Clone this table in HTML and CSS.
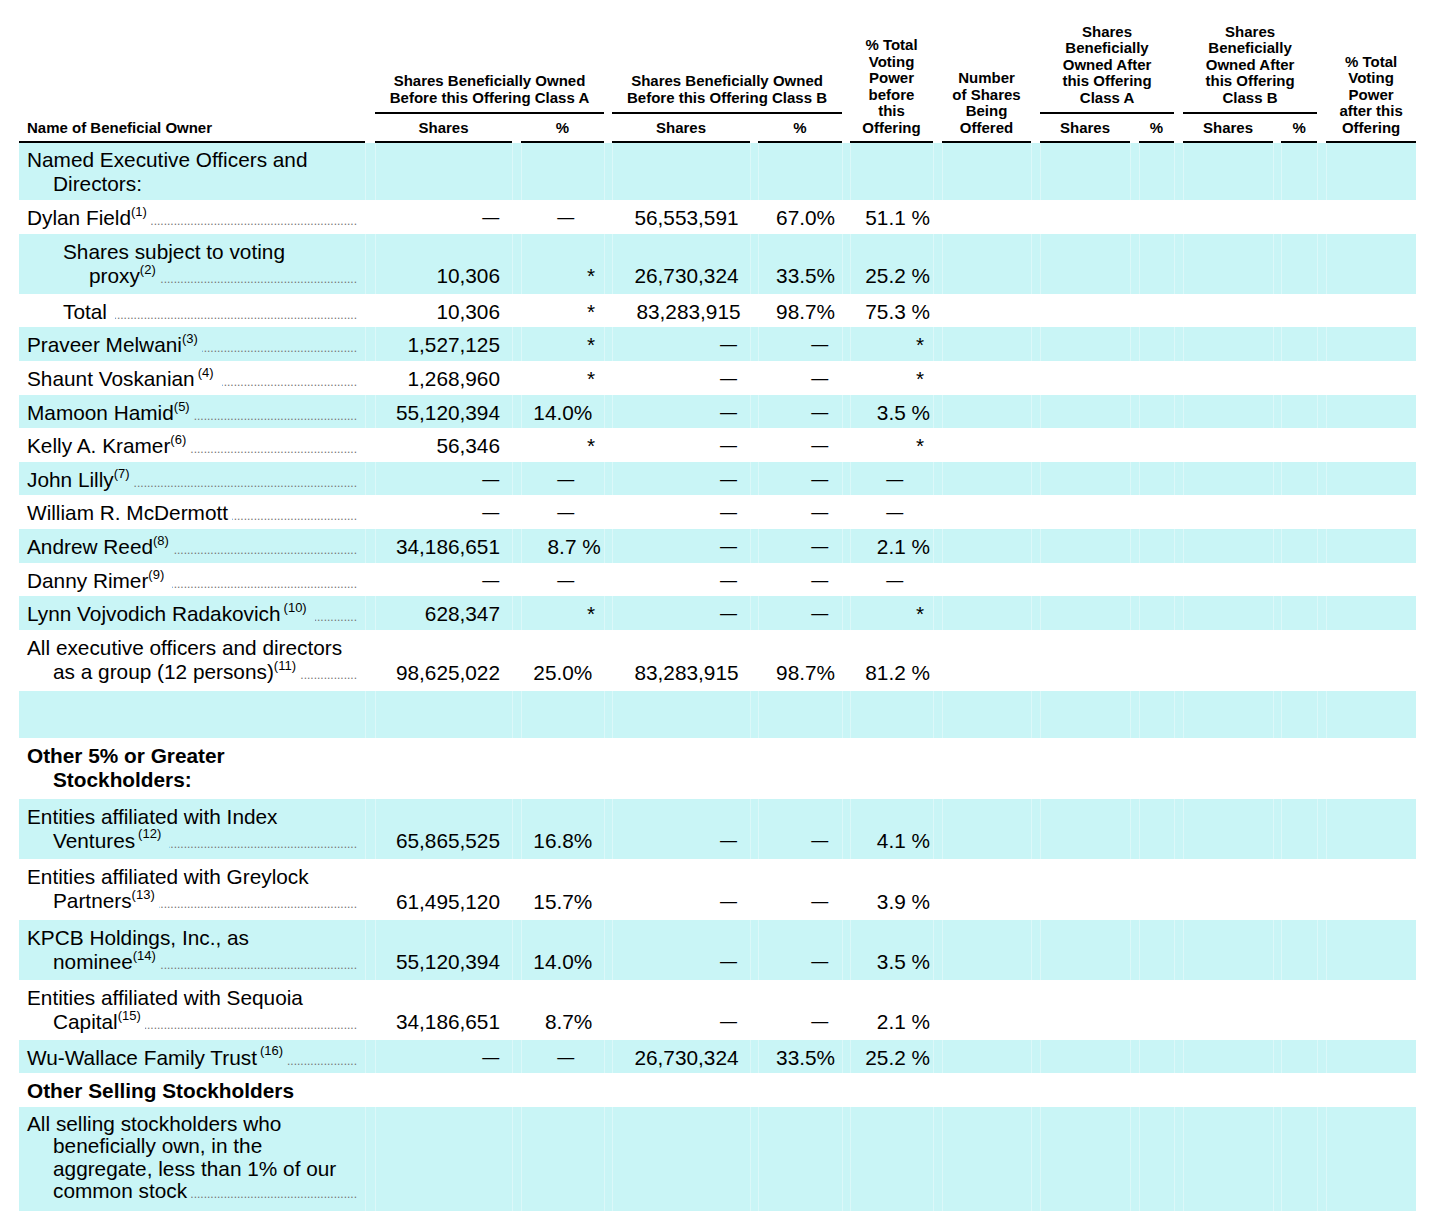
FILE: index.html
```html
<!DOCTYPE html>
<html lang="en">
<head>
<meta charset="utf-8">
<title>Beneficial Ownership Table</title>
<link rel="stylesheet" href="styles.css">
</head>
<body>
<div class="page">
<table class="own">
<colgroup>
<col class="w1"><col class="w2"><col class="w3"><col class="w4"><col class="w5"><col class="w6"><col class="w7"><col class="w8"><col class="w9"><col class="w10"><col class="w11"><col class="w12">
</colgroup>
<thead>
<tr>
<th rowspan="2" class="nmh"><div class="rule">Name of Beneficial Owner</div></th>
<th colspan="2" class="grp g10"><div class="rule">Shares Beneficially Owned<br>Before this Offering Class A</div></th>
<th colspan="2" class="grp g8"><div class="rule">Shares Beneficially Owned<br>Before this Offering Class B</div></th>
<th rowspan="2" class="g8"><div class="rule">% Total<br>Voting<br>Power<br>before<br>this<br>Offering</div></th>
<th rowspan="2" class="g9"><div class="rule">Number<br>of Shares<br>Being<br>Offered</div></th>
<th colspan="2" class="grp g9"><div class="rule">Shares<br>Beneficially<br>Owned After<br>this Offering<br>Class A</div></th>
<th colspan="2" class="grp g9"><div class="rule">Shares<br>Beneficially<br>Owned After<br>this Offering<br>Class B</div></th>
<th rowspan="2" class="g9"><div class="rule">% Total<br>Voting<br>Power<br>after this<br>Offering</div></th>
</tr>
<tr class="sub">
<th class="g10"><div class="rule">Shares</div></th>
<th class="g9"><div class="rule">%</div></th>
<th class="g8"><div class="rule">Shares</div></th>
<th class="g8"><div class="rule">%</div></th>
<th class="g9"><div class="rule">Shares</div></th>
<th class="g9"><div class="rule">%</div></th>
<th class="g9"><div class="rule">Shares</div></th>
<th class="g8"><div class="rule">%</div></th>
</tr>
</thead>
<tbody>
<tr class="c r57"><td class="nm"><div>Named Executive Officers and</div><div class="i1">Directors:</div></td><td></td><td></td><td></td><td></td><td></td><td></td><td></td><td></td><td></td><td></td><td></td></tr>
<tr><td class="nm"><div class="ln"><span class="t">Dylan Field<sup>(1)</sup></span><span class="dots"></span></div></td><td class="d">—</td><td class="d">—</td><td>56,553,591</td><td>67.0%</td><td>51.1&nbsp;%</td><td></td><td></td><td></td><td></td><td></td><td></td></tr>
<tr class="c r60"><td class="nm"><div class="i2">Shares subject to voting</div><div class="ln i3"><span class="t">proxy<sup>(2)</sup></span><span class="dots"></span></div></td><td>10,306</td><td class="s">*</td><td>26,730,324</td><td>33.5%</td><td>25.2&nbsp;%</td><td></td><td></td><td></td><td></td><td></td><td></td></tr>
<tr><td class="nm"><div class="ln i2"><span class="t">Total</span><span class="dots wide"></span></div></td><td>10,306</td><td class="s">*</td><td class="w">83,283,915</td><td>98.7%</td><td>75.3&nbsp;%</td><td></td><td></td><td></td><td></td><td></td><td></td></tr>
<tr class="c"><td class="nm"><div class="ln"><span class="t">Praveer Melwani<sup>(3)</sup></span><span class="dots"></span></div></td><td>1,527,125</td><td class="s">*</td><td class="d">—</td><td class="d">—</td><td class="s">*</td><td></td><td></td><td></td><td></td><td></td><td></td></tr>
<tr><td class="nm"><div class="ln"><span class="t">Shaunt Voskanian<sup class="gap">(4)</sup></span><span class="dots wide"></span></div></td><td>1,268,960</td><td class="s">*</td><td class="d">—</td><td class="d">—</td><td class="s">*</td><td></td><td></td><td></td><td></td><td></td><td></td></tr>
<tr class="c"><td class="nm"><div class="ln"><span class="t">Mamoon Hamid<sup>(5)</sup></span><span class="dots"></span></div></td><td>55,120,394</td><td>14.0%</td><td class="d">—</td><td class="d">—</td><td>3.5&nbsp;%</td><td></td><td></td><td></td><td></td><td></td><td></td></tr>
<tr><td class="nm"><div class="ln"><span class="t">Kelly A. Kramer<sup>(6)</sup></span><span class="dots"></span></div></td><td>56,346</td><td class="s">*</td><td class="d">—</td><td class="d">—</td><td class="s">*</td><td></td><td></td><td></td><td></td><td></td><td></td></tr>
<tr class="c"><td class="nm"><div class="ln"><span class="t">John Lilly<sup>(7)</sup></span><span class="dots"></span></div></td><td class="d">—</td><td class="d">—</td><td class="d">—</td><td class="d">—</td><td class="d">—</td><td></td><td></td><td></td><td></td><td></td><td></td></tr>
<tr><td class="nm"><div class="ln"><span class="t">William R. McDermott</span><span class="dots"></span></div></td><td class="d">—</td><td class="d">—</td><td class="d">—</td><td class="d">—</td><td class="d">—</td><td></td><td></td><td></td><td></td><td></td><td></td></tr>
<tr class="c"><td class="nm"><div class="ln"><span class="t">Andrew Reed<sup>(8)</sup></span><span class="dots"></span></div></td><td>34,186,651</td><td class="w">8.7&nbsp;%</td><td class="d">—</td><td class="d">—</td><td>2.1&nbsp;%</td><td></td><td></td><td></td><td></td><td></td><td></td></tr>
<tr><td class="nm"><div class="ln"><span class="t">Danny Rimer<sup>(9)</sup></span><span class="dots wide"></span></div></td><td class="d">—</td><td class="d">—</td><td class="d">—</td><td class="d">—</td><td class="d">—</td><td></td><td></td><td></td><td></td><td></td><td></td></tr>
<tr class="c"><td class="nm"><div class="ln"><span class="t">Lynn Vojvodich Radakovich<sup class="gap">(10)</sup></span><span class="dots wide"></span></div></td><td>628,347</td><td class="s">*</td><td class="d">—</td><td class="d">—</td><td class="s">*</td><td></td><td></td><td></td><td></td><td></td><td></td></tr>
<tr class="r61"><td class="nm"><div>All executive officers and directors</div><div class="ln i1"><span class="t">as a group (12 persons)<sup>(11)</sup></span><span class="dots"></span></div></td><td>98,625,022</td><td>25.0%</td><td>83,283,915</td><td>98.7%</td><td>81.2&nbsp;%</td><td></td><td></td><td></td><td></td><td></td><td></td></tr>
<tr class="c e"><td class="nm"></td><td></td><td></td><td></td><td></td><td></td><td></td><td></td><td></td><td></td><td></td><td></td></tr>
<tr class="r61"><td class="nm bold"><div>Other 5% or Greater</div><div class="i1">Stockholders:</div></td><td></td><td></td><td></td><td></td><td></td><td></td><td></td><td></td><td></td><td></td><td></td></tr>
<tr class="c r60"><td class="nm"><div>Entities affiliated with Index</div><div class="ln i1"><span class="t">Ventures<sup class="gap">(12)</sup></span><span class="dots wide"></span></div></td><td>65,865,525</td><td>16.8%</td><td class="d">—</td><td class="d">—</td><td>4.1&nbsp;%</td><td></td><td></td><td></td><td></td><td></td><td></td></tr>
<tr class="r61"><td class="nm"><div>Entities affiliated with Greylock</div><div class="ln i1"><span class="t">Partners<sup>(13)</sup></span><span class="dots"></span></div></td><td>61,495,120</td><td>15.7%</td><td class="d">—</td><td class="d">—</td><td>3.9&nbsp;%</td><td></td><td></td><td></td><td></td><td></td><td></td></tr>
<tr class="c r60"><td class="nm"><div>KPCB Holdings, Inc., as</div><div class="ln i1"><span class="t">nominee<sup>(14)</sup></span><span class="dots"></span></div></td><td>55,120,394</td><td>14.0%</td><td class="d">—</td><td class="d">—</td><td>3.5&nbsp;%</td><td></td><td></td><td></td><td></td><td></td><td></td></tr>
<tr class="r60"><td class="nm"><div>Entities affiliated with Sequoia</div><div class="ln i1"><span class="t">Capital<sup>(15)</sup></span><span class="dots"></span></div></td><td>34,186,651</td><td>8.7%</td><td class="d">—</td><td class="d">—</td><td>2.1&nbsp;%</td><td></td><td></td><td></td><td></td><td></td><td></td></tr>
<tr class="c"><td class="nm"><div class="ln"><span class="t">Wu-Wallace Family Trust<sup class="gap">(16)</sup></span><span class="dots"></span></div></td><td class="d">—</td><td class="d">—</td><td>26,730,324</td><td>33.5%</td><td>25.2&nbsp;%</td><td></td><td></td><td></td><td></td><td></td><td></td></tr>
<tr><td class="nm bold"><div>Other Selling Stockholders</div></td><td></td><td></td><td></td><td></td><td></td><td></td><td></td><td></td><td></td><td></td><td></td></tr>
<tr class="c r104"><td class="nm"><div>All selling stockholders who</div><div class="i1">beneficially own, in the</div><div class="i1">aggregate, less than 1% of our</div><div class="ln i1"><span class="t">common stock</span><span class="dots"></span></div></td><td></td><td></td><td></td><td></td><td></td><td></td><td></td><td></td><td></td><td></td><td></td></tr>
</tbody>
</table>
</div>
</body>
</html>
```
FILE: styles.css
```css
* { box-sizing: border-box; }
html, body { margin: 0; padding: 0; background: #fff; }
body { font-family: "Liberation Sans", Arial, Helvetica, sans-serif; color: #000; }

.page { padding: 23.5px 0 0 19px; }

.own { border-collapse: collapse; border-spacing: 0; table-layout: fixed; width: 1397px; }
.own th, .own td { padding: 0; }

.w1 { width: 346px; }
.w2 { width: 147px; }
.w3 { width: 92px; }
.w4 { width: 146px; }
.w5 { width: 92px; }
.w6 { width: 91px; }
.w7 { width: 98px; }
.w8 { width: 99px; }
.w9 { width: 44px; }
.w10 { width: 99px; }
.w11 { width: 44px; }
.w12 { width: 99px; }

/* header */
.own thead th { font-size: 15px; line-height: 16.5px; font-weight: bold; text-align: center; vertical-align: bottom; white-space: nowrap; }
.own thead .rule { border-bottom: 2px solid #000; padding-bottom: 5px; }
.own thead .grp .rule { padding-bottom: 6.4px; }
.own thead tr.sub th { padding-top: 5.4px; }
.own thead th.nmh { text-align: left; }
.own thead th.nmh .rule { padding-left: 8px; }
.own th.g8 { padding-left: 8px; }
.own th.g9 { padding-left: 9px; }
.own th.g10 { padding-left: 10px; }

/* body */
.own tbody td { font-size: 20.8px; line-height: 23.6px; padding: 6px 0 4px 0; vertical-align: bottom; text-align: right; white-space: nowrap; }
.own tbody td.nm { text-align: left; vertical-align: top; padding: 6px 8px 4px 8px; white-space: nowrap; }
.own tbody td.d { font-size: 17px; }
.own tbody tr.r57 td.nm { line-height: 24px; padding-top: 4.5px; padding-bottom: 4.5px; }
.own tbody tr.r60 td { padding-bottom: 6px; }
.own tbody tr.r60 td.nm { line-height: 24px; }
.own tbody tr.r61 td { padding-bottom: 6px; }
.own tbody tr.r61 td.nm { line-height: 24.5px; }
.own tbody tr.r104 td.nm { line-height: 22.3px; padding-bottom: 9.2px; }
.own tbody tr.e { height: 47px; }
.bold { font-weight: bold; }

.i1 { padding-left: 26px; }
.i2 { padding-left: 36px; }
.i3 { padding-left: 62px; }

.ln { display: flex; align-items: baseline; }
.ln .t { flex: none; }
.dots { flex: 1 1 auto; min-width: 0; overflow: hidden; white-space: nowrap; direction: rtl; font-size: 12px; line-height: 12px; color: #737373; margin-left: 4px; font-weight: normal; }
.dots.wide { margin-left: 8px; }
.dots::before { content: "................................................................................................................................"; }

sup { font-size: 13px; line-height: 0; vertical-align: 9.5px; }
sup.gap { margin-left: 3px; }

/* shaded rows with faint cell seams */
.own tbody tr.c td { background-color: #c9f5f6; }
.own tbody tr.c td + td {
  background-image: linear-gradient(rgba(255,255,255,.35), rgba(255,255,255,.35)), linear-gradient(rgba(255,255,255,.35), rgba(255,255,255,.35));
  background-size: 1px 100%, 1px 100%;
  background-repeat: no-repeat;
  background-position: 0 0, var(--g) 0;
}
.own tbody td:nth-child(2) { --g: 10px; }
.own tbody td:nth-child(3) { --g: 9px; }
.own tbody td:nth-child(4) { --g: 8px; }
.own tbody td:nth-child(5) { --g: 8px; }
.own tbody td:nth-child(6) { --g: 8px; }
.own tbody td:nth-child(7) { --g: 9px; }
.own tbody td:nth-child(8) { --g: 9px; }
.own tbody td:nth-child(9) { --g: 9px; }
.own tbody td:nth-child(10) { --g: 9px; }
.own tbody td:nth-child(11) { --g: 8px; }
.own tbody td:nth-child(12) { --g: 9px; }

/* numeric column alignment */
.own tbody td:nth-child(2) { padding-right: 12px; }
.own tbody td:nth-child(2).d { padding-right: 12.7px; }
.own tbody td:nth-child(3) { padding-right: 11.7px; }
.own tbody td:nth-child(3).s { padding-right: 9px; }
.own tbody td:nth-child(3).w { padding-right: 3.3px; }
.own tbody td:nth-child(3).d { padding-right: 29.7px; }
.own tbody td:nth-child(4) { padding-right: 11.5px; }
.own tbody td:nth-child(4).w { padding-right: 9.5px; }
.own tbody td:nth-child(4).d { padding-right: 13px; }
.own tbody td:nth-child(5) { padding-right: 7px; }
.own tbody td:nth-child(5).d { padding-right: 13.7px; }
.own tbody td:nth-child(6) { padding-right: 3px; }
.own tbody td:nth-child(6).s { padding-right: 9px; }
.own tbody td:nth-child(6).d { padding-right: 29.7px; }
```
